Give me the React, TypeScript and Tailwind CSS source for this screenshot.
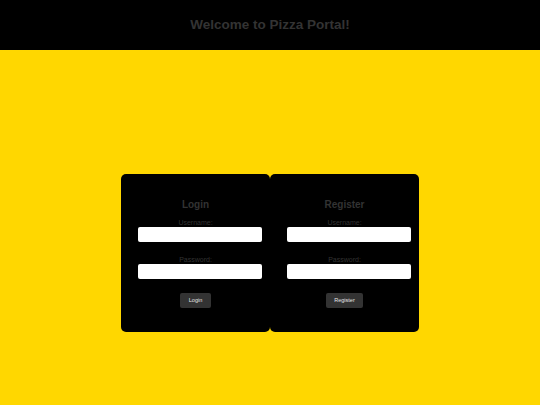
import React from "react";

function Card({ title, button }: { title: string; button: string }) {
  return (
    <div className="w-[149px] h-[158px] bg-black rounded-[5px] flex flex-col pt-[25px]">
      <h2 className="text-center text-[10px] leading-[12px] font-bold text-[#333]">{title}</h2>
      <label className="mt-[8px] text-center text-[7px] leading-[8px] text-[#333]">Username:</label>
      <input className="ml-[17px] w-[124px] h-[15px] bg-white rounded-[2px] outline-none border-0" />
      <label className="mt-[14px] text-center text-[7px] leading-[8px] text-[#333]">Password:</label>
      <input type="password" className="ml-[17px] w-[124px] h-[15px] bg-white rounded-[2px] outline-none border-0" />
      <div className="mt-[14px] flex justify-center">
        <button className="h-[15px] px-[8.5px] bg-[#333] text-[#e5e5e5] text-[5.5px] rounded-[2px]">{button}</button>
      </div>
    </div>
  );
}

export default function App() {
  return (
    <div className="min-h-[405px] bg-[#FFD700] font-['Liberation_Sans',Arial,sans-serif]">
      <header className="h-[50px] bg-black flex items-center justify-center">
        <h1 className="text-[13.5px] leading-[16px] font-bold text-[#333]">Welcome to Pizza Portal!</h1>
      </header>
      <main className="flex justify-center pt-[124px]">
        <Card title="Login" button="Login" />
        <Card title="Register" button="Register" />
      </main>
    </div>
  );
}
